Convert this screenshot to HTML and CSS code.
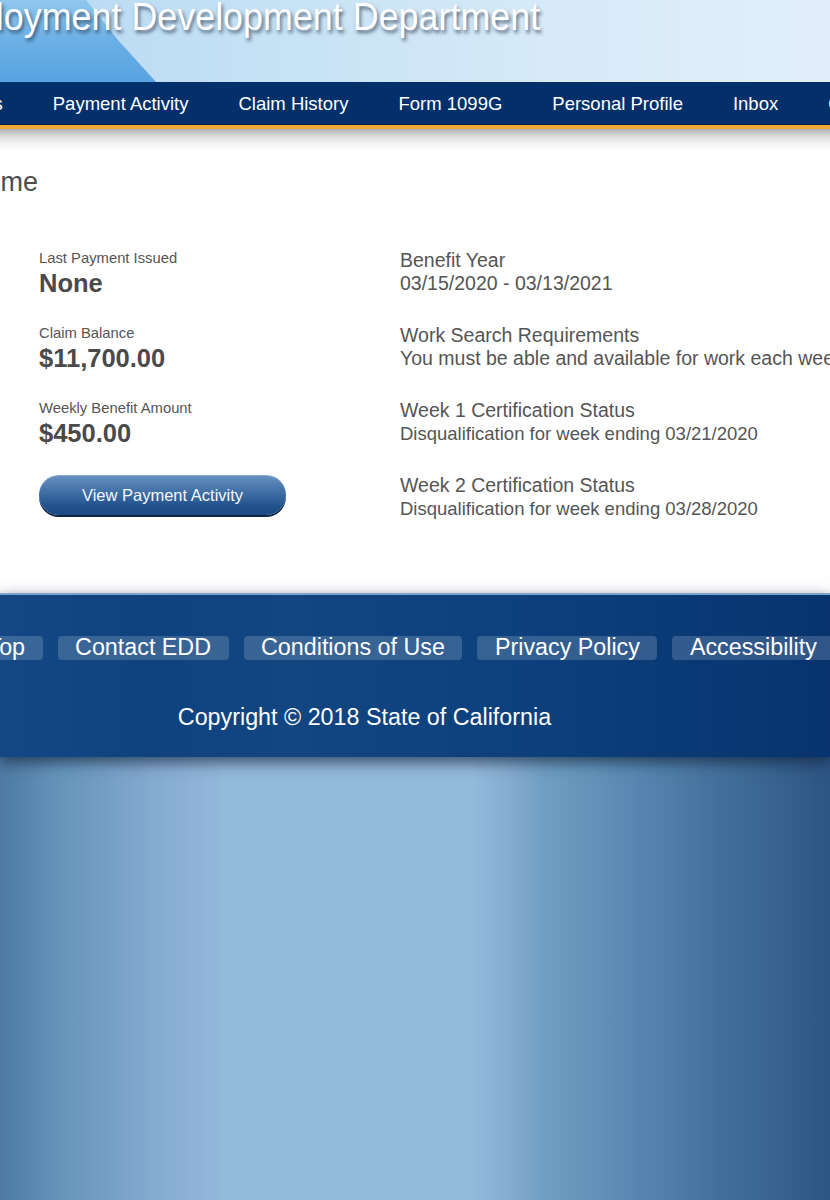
FILE: index.html
```html
<!DOCTYPE html>
<html lang="en">
<head>
<meta charset="utf-8">
<title>EDD - Home</title>
<link rel="stylesheet" href="styles.css">
</head>
<body>
<header class="banner">
  <div class="banner-title">Employment Development Department</div>
</header>
<nav class="topnav">
  <ul class="nav-list">
    <li>Notifications</li>
    <li>Payment Activity</li>
    <li>Claim History</li>
    <li>Form 1099G</li>
    <li>Personal Profile</li>
    <li>Inbox</li>
    <li>Contact Us</li>
  </ul>
</nav>
<main class="content">
  <h1 class="page-title">Home</h1>
  <div class="summary">
    <div class="col-left">
      <div class="stat">
        <div class="stat-label">Last Payment Issued</div>
        <div class="stat-value">None</div>
      </div>
      <div class="stat">
        <div class="stat-label">Claim Balance</div>
        <div class="stat-value">$11,700.00</div>
      </div>
      <div class="stat">
        <div class="stat-label">Weekly Benefit Amount</div>
        <div class="stat-value">$450.00</div>
      </div>
      <a class="btn-pill">View Payment Activity</a>
    </div>
    <div class="col-right">
      <div class="info">
        <div class="info-label">Benefit Year</div>
        <div class="info-value">03/15/2020 - 03/13/2021</div>
      </div>
      <div class="info">
        <div class="info-label">Work Search Requirements</div>
        <div class="info-value">You must be able and available for work each week.</div>
      </div>
      <div class="info">
        <div class="info-label">Week 1 Certification Status</div>
        <div class="info-value info-small">Disqualification for week ending 03/21/2020</div>
      </div>
      <div class="info">
        <div class="info-label">Week 2 Certification Status</div>
        <div class="info-value info-small">Disqualification for week ending 03/28/2020</div>
      </div>
    </div>
  </div>
</main>
<footer class="site-footer">
  <ul class="footer-links">
    <li><a class="footer-pill">Top</a></li>
    <li><a class="footer-pill">Contact EDD</a></li>
    <li><a class="footer-pill">Conditions of Use</a></li>
    <li><a class="footer-pill">Privacy Policy</a></li>
    <li><a class="footer-pill">Accessibility</a></li>
  </ul>
  <div class="copyright">Copyright © 2018 State of California</div>
</footer>
</body>
</html>
```
FILE: styles.css
```css
html, body {
  margin: 0;
  padding: 0;
}
body {
  font-family: "Liberation Sans", Arial, sans-serif;
  min-height: 1200px;
  overflow: hidden;
  background: linear-gradient(to right,
    #4e7aa3 0, #6594bb 60px, #84a9cf 150px, #93b9db 225px,
    #93b9db 470px, #85abcf 510px, #6f9ec2 545px, #5686b0 640px,
    #43709b 720px, #2d5583 830px);
}

/* Banner */
.banner {
  position: relative;
  height: 82px;
  overflow: hidden;
  background: linear-gradient(to right, #b7d9f2 0, #c4e1f5 30%, #d6eaf8 65%, #e2effa 100%);
}
.banner::before {
  content: "";
  position: absolute;
  left: 0;
  top: 0;
  width: 160px;
  height: 82px;
  background: linear-gradient(to bottom, #8fc7ee 0, #6cb0e6 50%, #56a2e0 100%);
  clip-path: polygon(0 0, 86px 0, 118px 40px, 156px 82px, 0 82px);
}
.banner-title {
  position: relative;
  margin: -3px 0 0 -78px;
  font-size: 39px;
  line-height: 39px;
  color: #fff;
  white-space: nowrap;
  transform: scaleX(0.92);
  transform-origin: 0 0;
  text-shadow: 2px 3px 4px rgba(20, 30, 50, 0.6);
}

/* Top navigation */
.topnav {
  background: #03306a;
  height: 43px;
  border-bottom: 4px solid #efa835;
  box-shadow: inset 0 -1px 0 #0a1f3d;
}
.nav-list {
  display: flex;
  align-items: center;
  height: 43px;
  margin: 0 0 0 -123px;
  padding: 0;
  list-style: none;
  white-space: nowrap;
}
.nav-list li {
  flex: none;
  padding: 0 25px;
  font-size: 18.5px;
  color: #fff;
}

/* Main content */
.content {
  background: linear-gradient(to bottom, #b2b2b2 0, #dadada 7px, #f5f5f5 15px, #fff 22px);
  padding: 37px 0 73px;
  color: #555;
  white-space: nowrap;
}
.page-title {
  margin: 0 0 51px -34px;
  font-size: 27px;
  line-height: 32px;
  font-weight: normal;
  color: #4d4d4d;
}
.summary {
  display: grid;
  grid-template-columns: 361px 1fr;
  padding-left: 39px;
}
.stat + .stat {
  margin-top: 25px;
}
.stat-label {
  font-size: 14.8px;
  line-height: 18px;
  color: #555;
}
.stat-value {
  font-size: 25.5px;
  line-height: 32px;
  font-weight: bold;
  color: #4a4a4a;
}
.btn-pill {
  display: flex;
  align-items: center;
  justify-content: center;
  margin-top: 26px;
  width: 247px;
  height: 40px;
  border-radius: 20px;
  color: #f4f7fb;
  font-size: 16.5px;
  background: linear-gradient(to bottom, #6690c0 0, #3f6ea5 45%, #24548e 75%, #1b4884 100%);
  box-shadow: 0 2px 0 #0d2447, inset 0 1px 0 rgba(255, 255, 255, 0.25);
}
.info + .info {
  margin-top: 29px;
}
.info-label,
.info-value {
  font-size: 19.5px;
  line-height: 23px;
  color: #555;
}
.info-value.info-small {
  font-size: 18.5px;
}

/* Footer */
.site-footer {
  position: relative;
  border-top: 2px solid #7ea3cc;
  padding: 41px 0 26px;
  color: #fff;
  background: linear-gradient(to right, #134885 0, #0f437f 18%, #124681 35%, #0d417e 60%, #07346f 100%);
  box-shadow: 0 5px 14px rgba(15, 30, 55, 0.7);
  overflow: hidden;
}
.footer-links {
  display: flex;
  gap: 15px;
  margin: 0 0 0 -30px;
  padding: 0;
  list-style: none;
  white-space: nowrap;
}
.footer-links li {
  flex: none;
}
.footer-pill {
  display: block;
  height: 24px;
  line-height: 23px;
  padding: 0 17.5px;
  font-size: 23.3px;
  border-radius: 4px;
  background: rgba(255, 255, 255, 0.17);
  color: #fff;
}
.copyright {
  width: 729px;
  margin-top: 43px;
  text-align: center;
  font-size: 23.3px;
  line-height: 28px;
  white-space: nowrap;
}
```
